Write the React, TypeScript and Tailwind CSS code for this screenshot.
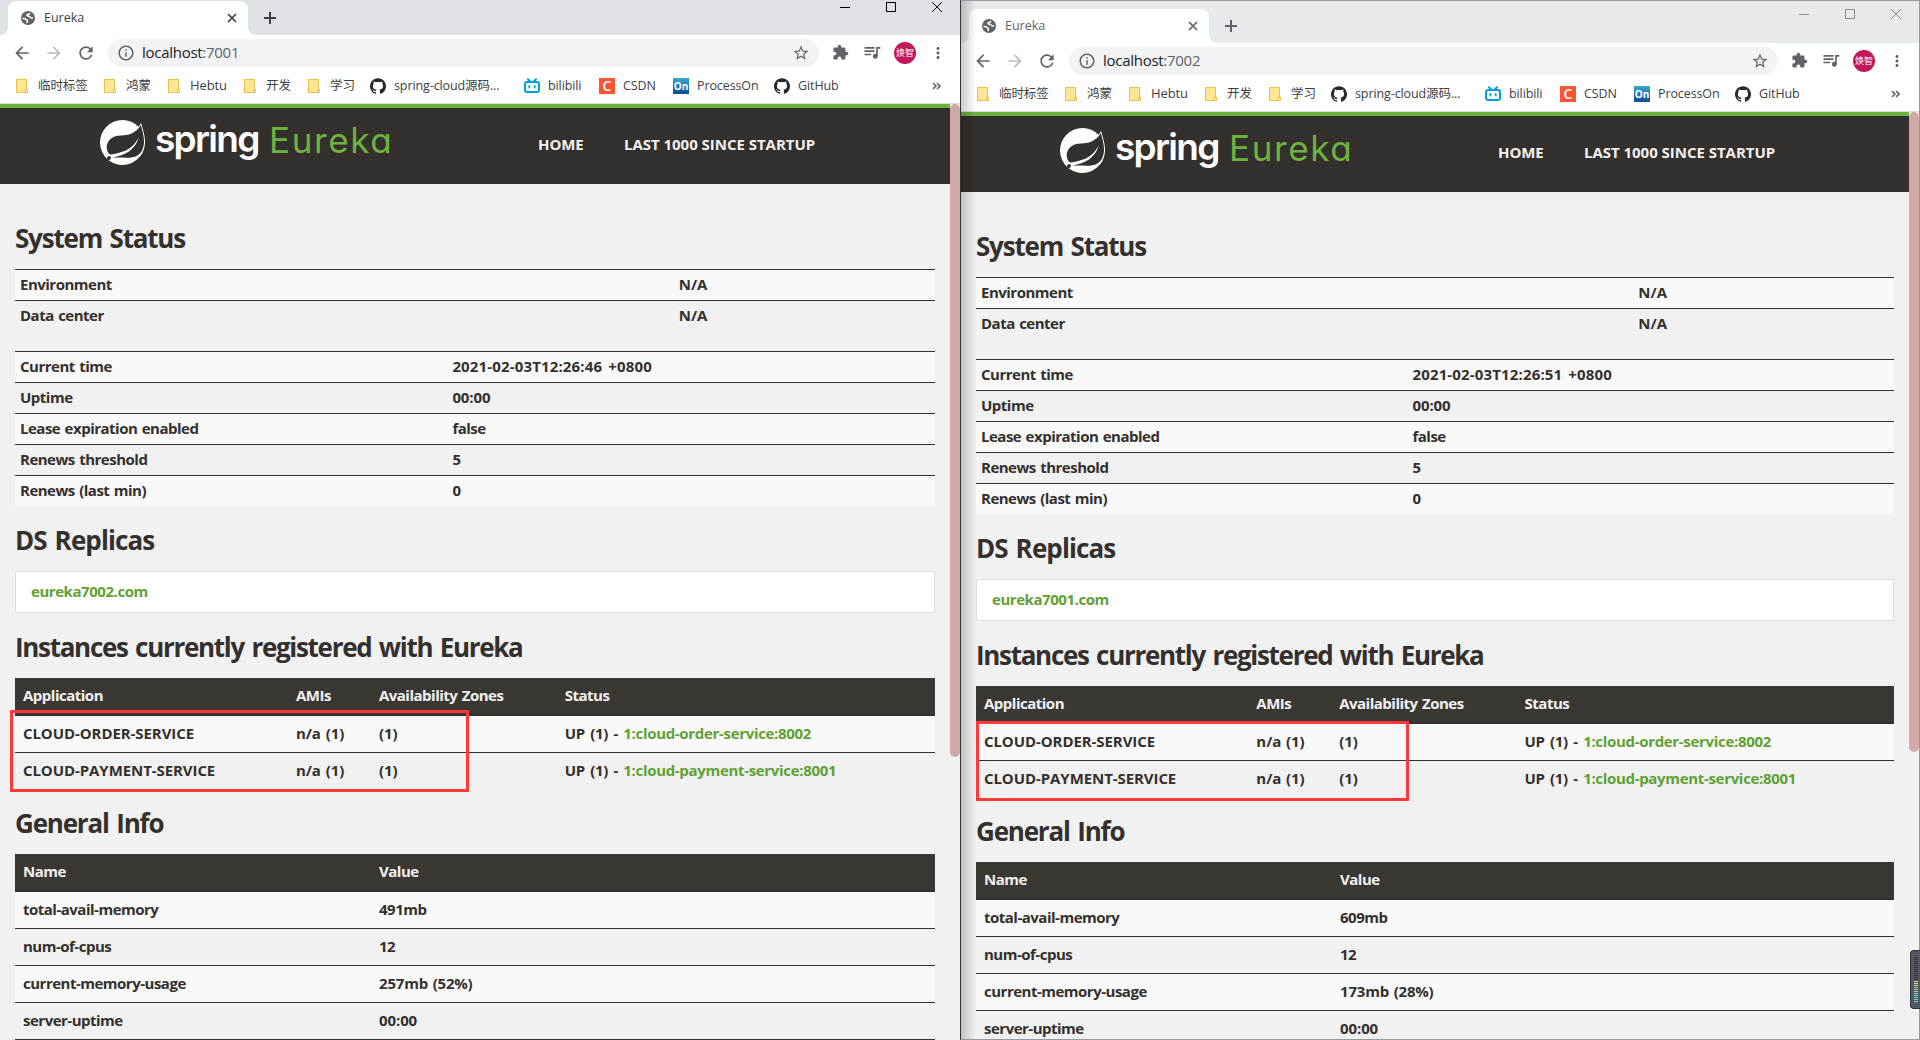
import React from 'react';
import { SiSpring, SiGithub } from 'react-icons/si';
import { MdExtension, MdQueueMusic, MdMoreVert, MdArrowBack, MdArrowForward, MdRefresh, MdStarBorder, MdInfoOutline } from 'react-icons/md';

interface WindowData {
  port: string;
  peer: string;
  time: string;
  totalMemory: string;
  usedMemory: string;
}

const left: WindowData = {
  port: '7001',
  peer: 'eureka7002.com',
  time: '2021-02-03T12:26:46 +0800',
  totalMemory: '491mb',
  usedMemory: '257mb (52%)',
};

const right: WindowData = {
  port: '7002',
  peer: 'eureka7001.com',
  time: '2021-02-03T12:26:51 +0800',
  totalMemory: '609mb',
  usedMemory: '173mb (28%)',
};

function GlobeIcon() {
  return (
    <svg width="14" height="14" viewBox="0 0 14 14" className="shrink-0">
      <circle cx="7" cy="7" r="7" fill="#5f6368" />
      <path
        d="M1.500 7.500c1.500-.3 2.700.1 3.200.9.4.7 1.500.2 1.700 1 .2.9-.5 1.100-.3 2.800M8.500 1.800c.2 1.200-.7 1.600-1.600 1.700-1 .2-1.300.9-.6 1.400.8.5 2.200.1 2.600 1 .4 1 1.200 1.300 3.200.8"
        fill="none"
        stroke="#fff"
        strokeWidth="1.500"
      />
    </svg>
  );
}

function FolderIcon() {
  return (
    <svg width="13" height="14" viewBox="0 0 13 14" className="shrink-0">
      <path d="M.5.5h10v9.5h1v3.5H.5z" fill="#ffe694" stroke="#e8c14d" />
      <path d="M9.5 13.5V10.500h2v3z" fill="#fff0b8" stroke="#e8c14d" />
    </svg>
  );
}

function BilibiliIcon() {
  return (
    <svg width="16" height="16" viewBox="0 0 16 16" fill="none" stroke="#00a1d6" strokeWidth="2" strokeLinecap="round">
      <rect x="1" y="4" width="14" height="10" rx="2.2" />
      <path d="M4 1.300l2 2M12 1.300l-2 2" />
      <path d="M5.300 8v1.500M10.700 8v1.500" strokeWidth="1.800" />
    </svg>
  );
}

function Bookmark({ label, width, children }: { label: string; width: string; children: React.ReactNode }) {
  return (
    <div className={`flex items-center shrink-0 ${width}`}>
      <div className="w-[16px] h-[16px] flex items-center shrink-0">{children}</div>
      <span className="ml-2 whitespace-nowrap">{label}</span>
    </div>
  );
}

function BookmarksBar() {
  return (
    <div className="h-[34px] flex items-center pl-4 pr-[19px] bg-white text-[12.500px] text-[#3c4043] tracking-[-0.1px]">
      <div className="flex items-center w-[88px] shrink-0"><FolderIcon /><span className="ml-[9px]">临时标签</span></div>
      <div className="flex items-center w-[64px] shrink-0"><FolderIcon /><span className="ml-[9px]">鸿蒙</span></div>
      <div className="flex items-center w-[76px] shrink-0"><FolderIcon /><span className="ml-[9px] text-[13px]">Hebtu</span></div>
      <div className="flex items-center w-[64px] shrink-0"><FolderIcon /><span className="ml-[9px]">开发</span></div>
      <div className="flex items-center w-[62px] shrink-0"><FolderIcon /><span className="ml-[9px]">学习</span></div>
      <Bookmark label="spring-cloud源码..." width="w-[154px]"><SiGithub className="w-4 h-4 text-[#24292e]" /></Bookmark>
      <Bookmark label="bilibili" width="w-[75px]"><BilibiliIcon /></Bookmark>
      <Bookmark label="CSDN" width="w-[74px]">
        <div className="w-4 h-4 bg-[#fc5531] text-white text-[14px] leading-4 text-center font-semibold">C</div>
      </Bookmark>
      <Bookmark label="ProcessOn" width="w-[101px]">
        <div className="w-4 h-4 bg-linear-to-b from-[#39a9cf] to-[#134a8e] text-white text-[10px] leading-4 text-center font-bold">On</div>
      </Bookmark>
      <Bookmark label="GitHub" width="w-[80px]"><SiGithub className="w-4 h-4 text-[#24292e]" /></Bookmark>
      <svg width="9" height="8" viewBox="0 0 9 8" fill="none" stroke="#5f6368" strokeWidth="1.600" className="ml-auto">
        <path d="M1 1l3 3-3 3M5 1l3 3-3 3" />
      </svg>
    </div>
  );
}

function BrowserChrome({ port, active }: { port: string; active: boolean }) {
  return (
    <div>
      <div className={`flex ${active ? 'h-[35px] bg-[#dee1e6] pt-px text-[#3c4043]' : 'h-[42px] bg-[#e7eaed] pt-2 text-[#5f6368]'}`}>
        <div className="w-2 bg-white">
          <div className={`h-full rounded-br-lg ${active ? 'bg-[#dee1e6]' : 'bg-[#e7eaed]'}`} />
        </div>
        <div className="w-[240px] h-[34px] bg-white rounded-t-lg flex items-center pl-[13px] pr-[11px]">
          <GlobeIcon />
          <span className="ml-[9px] text-[12.500px]">Eureka</span>
          <svg width="10" height="10" viewBox="0 0 10 10" stroke="currentColor" strokeWidth="1.700" className="ml-auto">
            <path d="M1 1l8 8M9 1L1 9" />
          </svg>
        </div>
        <div className="w-2 bg-white">
          <div className={`h-full rounded-bl-lg ${active ? 'bg-[#dee1e6]' : 'bg-[#e7eaed]'}`} />
        </div>
        <svg width="12" height="12" viewBox="0 0 12 12" stroke="currentColor" strokeWidth="2" className="ml-2 mt-[11px]">
          <path d="M6 0v12M0 6h12" />
        </svg>
        <svg
          width="104"
          height="12"
          viewBox="0 0 104 12"
          fill="none"
          stroke={active ? '#000' : '#8b8d90'}
          className={`ml-auto mr-[17px] ${active ? '' : '-mt-px'}`}
        >
          <path d="M1 6.500h10" />
          <rect x="47.500" y="1.500" width="9" height="9" />
          <path d="M93 1l10 10M103 1L93 11" />
        </svg>
      </div>
      <div className="h-[34px] pt-1 pr-[17px] bg-white flex text-[#5f6368]">
        <MdArrowBack className="w-[20px] h-[20px] mt-1 ml-3" />
        <MdArrowForward className="w-[20px] h-[20px] mt-1 ml-3 text-[#babcbe]" />
        <MdRefresh className="w-[20px] h-[20px] mt-1 ml-3" />
        <div className="ml-3 h-7 flex-1 rounded-full bg-[#f1f3f4] flex items-center pl-[9px] pr-[9px]">
          <MdInfoOutline className="w-[18px] h-[18px]" />
          <span className="ml-[7px] -mt-[2px] text-[15px] tracking-[-0.28px] text-[#202124]">
            localhost<span className="text-[#5f6368]">:{port}</span>
          </span>
          <MdStarBorder className="w-[18px] h-[18px] ml-auto" />
        </div>
        <MdExtension className="w-[17px] h-[17px] mt-[5px] ml-[13px]" />
        <MdQueueMusic className="w-[20px] h-[20px] mt-[3px] ml-[13px]" />
        <div className="w-[22px] h-[22px] mt-[3px] ml-3 rounded-full bg-[#c2185b] text-white text-[9px] leading-[22px] text-center whitespace-nowrap">焕智</div>
        <MdMoreVert className="w-[18px] h-[18px] mt-[5px] ml-[13px] -mr-1" />
      </div>
      <BookmarksBar />
      <div className="h-px bg-[#dadce0]" />
    </div>
  );
}

function PageHeader() {
  return (
    <div className="h-20 border-t-4 border-[#6db33f] bg-[#34302d]">
      <div className="w-[750px] mx-auto flex text-[#f1f1f1]">
        <SiSpring className="w-[45px] h-[45px] mt-3 text-white" />
        <span className="ml-[10px] mt-[9px] w-[105px] font-['Inter'] text-[37px] leading-[44px] font-semibold tracking-[-1.7px] text-white">spring</span>
        <span className="ml-[9px] mt-[10px] w-[122px] font-['Inter'] text-[35px] leading-[44px] font-normal tracking-[1.6px] text-[#6db33f] [font-feature-settings:'cv11']">Eureka</span>
        <span className="ml-[147px] mt-[25px] text-[15px] leading-[22px] font-bold tracking-[-0.1px] whitespace-nowrap w-[86px]">HOME</span>
        <span className="mt-[25px] text-[15px] leading-[22px] font-bold tracking-[-0.03px] whitespace-nowrap">LAST 1000 SINCE STARTUP</span>
      </div>
    </div>
  );
}

function StatusTable({ rows, columns }: { rows: React.ReactNode[][]; columns: string }) {
  return (
    <div>
      {rows.map(([name, value], i) => (
        <div key={i} className={`grid ${columns} h-[31px] border-t border-[#34302d] odd:bg-[#f9f9f9] leading-[28px]`}>
          <span className="pl-[5px]">{name}</span>
          <span className="pl-[5px]">{value}</span>
        </div>
      ))}
    </div>
  );
}

function StripedTable({ head, rows, columns }: { head: string[]; rows: React.ReactNode[][]; columns: string }) {
  return (
    <div>
      <div className={`grid ${columns} h-[38px] border-b-2 border-[#34302d] bg-[#3b3833] text-[#f1f1f1] leading-[34px]`}>
        {head.map((label) => (
          <span key={label} className="pl-2">{label}</span>
        ))}
      </div>
      {rows.map((cells, i) => (
        <div key={i} className={`grid ${columns} ${i === 0 ? 'h-9' : 'h-[37px] border-t border-[#34302d]'} ${i % 2 === 0 ? 'bg-[#f9f9f9]' : ''} leading-[34px]`}>
          {cells.map((cell, j) => (
            <span key={j} className="pl-2">{cell}</span>
          ))}
        </div>
      ))}
    </div>
  );
}

function Heading({ children, tracking = 'tracking-[-1.2px]' }: { children: React.ReactNode; tracking?: string }) {
  return <h1 className={`text-[26px] leading-[29px] pb-px font-bold [word-spacing:2px] ${tracking}`}>{children}</h1>;
}

function AppName({ children }: { children: React.ReactNode }) {
  return <span className="tracking-[-0.08px]">{children}</span>;
}

function InstanceLink({ children }: { children: React.ReactNode }) {
  return <span className="tracking-[-0.32px] [word-spacing:1.8px]">UP (1) - <a className="text-[#5fa134]">{children}</a></span>;
}

function EurekaPage({ data, thumb }: { data: WindowData; thumb: string }) {
  return (
    <div className="flex-1 min-h-0 flex overflow-hidden bg-[#f1f1f1]">
      <div className="flex-1 min-w-0 text-[#34302d]">
        <PageHeader />
        <div className="px-[15px] pt-10 text-[15px] font-bold tracking-[-0.5px] [word-spacing:1px] whitespace-nowrap">
          <Heading>System Status</Heading>
          <div className="mt-[15px]">
            <StatusTable
              columns="grid-cols-[71.6%_1fr]"
              rows={[
                ['Environment', <span className="tracking-normal">N/A</span>],
                ['Data center', <span className="tracking-normal">N/A</span>],
              ]}
            />
          </div>
          <div className="mt-5">
            <StatusTable
              columns="grid-cols-[47%_1fr]"
              rows={[
                ['Current time', <span className="tracking-[0.15px] [word-spacing:2px]">{data.time}</span>],
                ['Uptime', <span className="tracking-[-0.1px]">00:00</span>],
                ['Lease expiration enabled', 'false'],
                ['Renews threshold', '5'],
                ['Renews (last min)', '0'],
              ]}
            />
          </div>
          <div className="mt-5"><Heading tracking="tracking-[-0.9px]">DS Replicas</Heading></div>
          <div className="mt-[15px] h-[42px] border border-[#dddddd] bg-white pl-[15px] leading-[38px] tracking-[-0.45px] text-[#5fa134]">{data.peer}</div>
          <div className="mt-5"><Heading tracking="tracking-[-1.3px]">Instances currently registered with Eureka</Heading></div>
          <div className="mt-[15px]">
            <StripedTable
              columns="grid-cols-[29.67%_9.02%_20.2%_1fr]"
              head={['Application', 'AMIs', 'Availability Zones', 'Status']}
              rows={[
                [
                  <AppName>CLOUD-ORDER-SERVICE</AppName>,
                  <AppName>n/a (1)</AppName>,
                  <AppName>(1)</AppName>,
                  <InstanceLink>1:cloud-order-service:8002</InstanceLink>,
                ],
                [
                  <AppName>CLOUD-PAYMENT-SERVICE</AppName>,
                  <AppName>n/a (1)</AppName>,
                  <AppName>(1)</AppName>,
                  <InstanceLink>1:cloud-payment-service:8001</InstanceLink>,
                ],
              ]}
            />
          </div>
          <div className="mt-5"><Heading>General Info</Heading></div>
          <div className="mt-[15px]">
            <StripedTable
              columns="grid-cols-[356px_1fr]"
              head={['Name', 'Value']}
              rows={[
                ['total-avail-memory', data.totalMemory],
                ['num-of-cpus', '12'],
                ['current-memory-usage', <span className="tracking-[-0.2px]">{data.usedMemory}</span>],
                ['server-uptime', <span className="tracking-[-0.1px]">00:00</span>],
                ['', ''],
              ]}
            />
          </div>
        </div>
      </div>
      <div className="w-[10px]">
        <div className={`${thumb} w-[10px] rounded-full bg-[#d1aaa8]`} />
      </div>
    </div>
  );
}

function VolumeMeter() {
  return (
    <div className="absolute right-0 top-[950px] w-[10px] h-[59px] rounded-l-[4px] border border-r-0 border-[#30333d] bg-[#535766] pt-[6px] pl-[3px] flex flex-col gap-px">
      {Array.from({ length: 23 }, (_, i) => (
        <div key={i} className={`w-1 h-px shrink-0 ${i < 12 ? 'bg-[#30333d]' : i < 15 ? 'bg-[#d5e084]' : i < 19 ? 'bg-[#96dc9b]' : 'bg-[#66dcc8]'}`} />
      ))}
    </div>
  );
}

export default function App() {
  return (
    <div className="relative w-[1920px] h-[1040px] overflow-hidden flex font-['Open_Sans','Noto_Sans_CJK_SC',sans-serif]">
      <div className="w-[960px] flex flex-col">
        <BrowserChrome port={left.port} active />
        <EurekaPage data={left} thumb="h-[653px]" />
      </div>
      <div className="relative w-[960px] flex flex-col border border-l-[#34353a] border-[#97999c]">
        <BrowserChrome port={right.port} active={false} />
        <EurekaPage data={right} thumb="h-[640px]" />
        <div className="absolute left-0 inset-y-0 w-[15px] bg-linear-to-r from-black/20 to-transparent" />
      </div>
      <div className="absolute left-[10px] top-[710px] w-[459px] h-[82px] border-[3px] border-[#ff3838]" />
      <div className="absolute left-[976px] top-[721px] w-[433px] h-[80px] border-[3px] border-[#ff3838]" />
      <VolumeMeter />
    </div>
  );
}
